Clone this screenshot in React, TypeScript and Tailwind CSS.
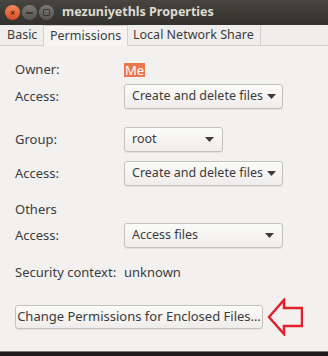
import React from 'react';

const font = { fontFamily: '"Noto Sans", "Open Sans", sans-serif' };

function Combo({ label, width }: { label: string; width: string }) {
  return (
    <div
      className={`flex h-[25px] ${width} items-center justify-between whitespace-nowrap rounded-[3px] border border-[#c4c0ba] bg-gradient-to-b from-[#fbfbfa] to-[#efedeb] pl-[7px] pr-[8px] text-[12.5px] text-[#3c3c3c] shadow-[0_1px_0_rgba(0,0,0,0.06)]`}
    >
      <span>{label}</span>
      <svg width="9" height="5" viewBox="0 0 9 5" className="ml-[4px] shrink-0">
        <path d="M0 0 H9 L4.5 5 Z" fill="#3c3c3c" />
      </svg>
    </div>
  );
}

function Row({ label, children, className = '' }: { label: string; children: React.ReactNode; className?: string }) {
  return (
    <div className={`flex items-center ${className}`}>
      <span className="w-[109px] shrink-0 whitespace-nowrap text-[13px] text-[#3c3c3c]">{label}</span>
      {children}
    </div>
  );
}

export default function App() {
  return (
    <div className="flex h-[356px] w-[328px] flex-col overflow-hidden bg-[#f2f1f0]" style={font}>
      <div className="flex h-[25px] shrink-0 items-center bg-gradient-to-b from-[#46453f] to-[#32312d] pl-[5px]">
        <div className="flex items-center gap-[2px]">
          <span className="flex h-[15px] w-[15px] items-center justify-center rounded-full bg-gradient-to-b from-[#f08a5d] to-[#d84a1e] text-[9px] font-bold leading-none text-[#5a1d08]">
            ×
          </span>
          <span className="flex h-[15px] w-[15px] items-center justify-center rounded-full bg-gradient-to-b from-[#7b7a75] to-[#55544f]">
            <span className="h-[2px] w-[7px] bg-[#3a3935]" />
          </span>
          <span className="flex h-[15px] w-[15px] items-center justify-center rounded-full bg-gradient-to-b from-[#7b7a75] to-[#55544f]">
            <span className="h-[7px] w-[7px] rounded-[1px] border border-[#3a3935]" />
          </span>
        </div>
        <span className="ml-[8px] whitespace-nowrap text-[12.5px] font-bold text-[#dfdbd2]">mezuniyethls Properties</span>
      </div>

      <div className="flex h-[21px] shrink-0 items-stretch border-b border-[#d3cfca] bg-[#f0eeec] text-[12.5px] text-[#3c3c3c]">
        <div className="flex w-[43px] items-center pl-[7px]">Basic</div>
        <div className="-mb-px flex w-[85px] items-center border-x border-t border-[#d3cfca] bg-[#f5f4f3] pl-[6px]">
          Permissions
        </div>
        <div className="flex w-[133px] items-center whitespace-nowrap border-r border-[#d3cfca] pl-[5px]">Local Network Share</div>
      </div>

      <div className="flex flex-1 flex-col pl-[15px]">
        <Row label="Owner:" className="mt-[16px] h-[16px]">
          <span className="bg-[#e9784f] px-[1px] text-[13px] leading-[14px] text-white">Me</span>
        </Row>
        <Row label="Access:" className="mt-[6px]">
          <Combo label="Create and delete files" width="w-[159px]" />
        </Row>
        <Row label="Group:" className="mt-[18px]">
          <Combo label="root" width="w-[99px]" />
        </Row>
        <Row label="Access:" className="mt-[9px]">
          <Combo label="Create and delete files" width="w-[159px]" />
        </Row>
        <div className="mt-[16px] flex h-[16px] items-center text-[13px] text-[#3c3c3c]">Others</div>
        <Row label="Access:" className="mt-[5px]">
          <Combo label="Access files" width="w-[159px]" />
        </Row>
        <Row label="Security context:" className="mt-[17px] h-[16px]">
          <span className="text-[13px] text-[#3c3c3c]">unknown</span>
        </Row>
        <div className="mt-[17px] flex items-center">
          <button className="h-[24px] w-[248px] whitespace-nowrap rounded-[3px] border border-[#c4c0ba] bg-gradient-to-b from-[#fbfbfa] to-[#efedeb] text-[13px] text-[#3c3c3c] shadow-[0_1px_0_rgba(0,0,0,0.06)]">
            Change Permissions for Enclosed Files…
          </button>
          <svg width="36" height="38" viewBox="0 0 36 38" className="ml-[4px]">
            <path d="M2 19 L17 2 L17 10 L35 10 L35 28 L17 28 L17 36 Z" fill="none" stroke="#e3202a" strokeWidth="2.5" strokeLinejoin="miter" />
          </svg>
        </div>
      </div>

      <div className="h-[5px] shrink-0 border-t border-[#7a7772] bg-[#1d1a1c]" />
    </div>
  );
}
